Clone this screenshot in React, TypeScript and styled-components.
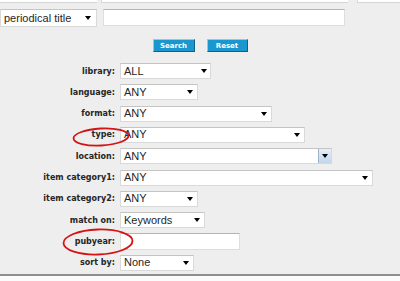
import React from "react";
import styled, { createGlobalStyle } from "styled-components";

const Global = createGlobalStyle`
  html, body { margin: 0; padding: 0; background: #eeeeee; }
  #root { width: 400px; height: 281px; }
`;

const Page = styled.div`
  position: relative;
  width: 400px;
  height: 281px;
  overflow: hidden;
  background: #eeeeee;
  display: flex;
  flex-direction: column;
  font-family: "Liberation Sans", Arial, sans-serif;
`;

const TopStrip = styled.div`
  display: flex;
  height: 3px;
  flex-shrink: 0;
`;

const StripBox = styled.div<{ $w: number; $ml?: number; $edge?: boolean }>`
  width: ${(p) => p.$w}px;
  margin-left: ${(p) => p.$ml ?? 0}px;
  height: 3px;
  box-sizing: border-box;
  background: #ffffff;
  border-left: ${(p) => (p.$edge ? "1px solid #d8d8d8" : "none")};
  border-bottom: 1px solid #d6d6d6;
`;

const SearchRow = styled.div`
  display: flex;
  align-items: flex-start;
  gap: 6px;
  margin-top: 6px;
  flex-shrink: 0;
`;

const SelectBox = styled.div<{ $w: number; $h?: number; $fs?: number }>`
  width: ${(p) => p.$w}px;
  height: ${(p) => p.$h ?? 16}px;
  box-sizing: border-box;
  display: flex;
  align-items: center;
  background: #ffffff;
  border: 1px solid #d9d9d9;
  border-top-color: #c4c4c4;
  padding-left: 3px;
  font-size: ${(p) => p.$fs ?? 11}px;
  color: #262626;
  white-space: nowrap;
  overflow: hidden;
`;

const SelectText = styled.span`
  flex: 1;
  line-height: 1;
`;

const Caret = styled.span<{ $mr?: number }>`
  width: 0;
  height: 0;
  border-left: 3.5px solid transparent;
  border-right: 3.5px solid transparent;
  border-top: 4px solid #000000;
  margin-right: ${(p) => p.$mr ?? 4}px;
  flex-shrink: 0;
`;

const DropButton = styled.span`
  width: 14px;
  align-self: stretch;
  margin: -1px -1px -1px 0;
  box-sizing: border-box;
  border: 1px solid #9db3cc;
  border-radius: 1px;
  background: linear-gradient(#e6eef8, #c3d6ec);
  display: flex;
  align-items: center;
  justify-content: center;
`;

const TextInput = styled.div<{ $w: number; $h?: number }>`
  width: ${(p) => p.$w}px;
  height: ${(p) => p.$h ?? 16}px;
  box-sizing: border-box;
  background: #ffffff;
  border: 1px solid #dedede;
  border-top-color: #b4b4b4;
`;

const ButtonRow = styled.div`
  display: flex;
  justify-content: center;
  gap: 12px;
  margin-top: 12px;
  flex-shrink: 0;
`;

const Button = styled.div<{ $w: number }>`
  width: ${(p) => p.$w}px;
  height: 13px;
  box-sizing: border-box;
  display: flex;
  align-items: center;
  justify-content: center;
  background: #1b97cf;
  border: 1px solid #135f85;
  border-top-color: #8ccbe9;
  border-left-color: #8ccbe9;
  color: #ffffff;
  font-family: "DejaVu Sans", Verdana, sans-serif;
  font-weight: bold;
  font-size: 7px;
`;

const Form = styled.div`
  display: grid;
  grid-template-columns: 115px auto;
  column-gap: 5px;
  row-gap: 5.33px;
  grid-auto-rows: 16px;
  margin-top: 11px;
  flex-shrink: 0;
`;

const Label = styled.div`
  display: flex;
  align-items: center;
  justify-content: flex-end;
  font-family: "DejaVu Sans", Verdana, sans-serif;
  font-weight: bold;
  font-size: 8px;
  color: #262626;
  white-space: nowrap;
`;

const Cell = styled.div`
  display: flex;
  align-items: center;
`;

const Footer = styled.div`
  flex: 1;
  margin-top: 3px;
  border-top: 2px solid #8e8e8e;
  background: #fbfbfb;
`;

const Annotation = styled.svg`
  position: absolute;
  overflow: visible;
  pointer-events: none;
`;

type Field =
  | { label: string; kind: "select"; value: string; w: number; xp?: boolean; mr?: number }
  | { label: string; kind: "input"; w: number };

const fields: Field[] = [
  { label: "library:", kind: "select", value: "ALL", w: 91, mr: 3 },
  { label: "language:", kind: "select", value: "ANY", w: 78 },
  { label: "format:", kind: "select", value: "ANY", w: 152 },
  { label: "type:", kind: "select", value: "ANY", w: 185 },
  { label: "location:", kind: "select", value: "ANY", w: 212, xp: true },
  { label: "item category1:", kind: "select", value: "ANY", w: 253 },
  { label: "item category2:", kind: "select", value: "ANY", w: 78 },
  { label: "match on:", kind: "select", value: "Keywords", w: 85 },
  { label: "pubyear:", kind: "input", w: 120 },
  { label: "sort by:", kind: "select", value: "None", w: 74 },
];

export default function App() {
  return (
    <>
      <Global />
      <Page>
        <TopStrip>
          <StripBox $w={97} />
          <StripBox $w={247} $ml={4} $edge />
          <StripBox $w={43} $ml={9} $edge />
        </TopStrip>

        <SearchRow>
          <SelectBox $w={97} $h={18} $fs={11}>
            <SelectText>periodical title</SelectText>
            <Caret $mr={5} />
          </SelectBox>
          <TextInput $w={242} $h={17} />
        </SearchRow>

        <ButtonRow>
          <Button $w={42}>Search</Button>
          <Button $w={41}>Reset</Button>
        </ButtonRow>

        <Form>
          {fields.map((f) => (
            <React.Fragment key={f.label}>
              <Label>{f.label}</Label>
              <Cell>
                {f.kind === "select" ? (
                  <SelectBox $w={f.w}>
                    <SelectText>{f.value}</SelectText>
                    {f.xp ? (
                      <DropButton>
                        <Caret $mr={0} />
                      </DropButton>
                    ) : (
                      <Caret $mr={f.mr ?? 4} />
                    )}
                  </SelectBox>
                ) : (
                  <TextInput $w={f.w} $h={17} />
                )}
              </Cell>
            </React.Fragment>
          ))}
        </Form>

        <Footer />

        <Annotation
          style={{ left: 72, top: 127 }}
          width="58"
          height="20"
          viewBox="0 0 58 20"
        >
          <ellipse
            cx="29"
            cy="10"
            rx="27.5"
            ry="8.5"
            transform="rotate(-3 29 10)"
            fill="none"
            stroke="#d41414"
            strokeWidth="1.8"
          />
        </Annotation>
        <Annotation
          style={{ left: 62, top: 228 }}
          width="72"
          height="28"
          viewBox="0 0 72 28"
        >
          <ellipse
            cx="36"
            cy="14"
            rx="34.5"
            ry="12.5"
            transform="rotate(-2 36 14)"
            fill="none"
            stroke="#d41414"
            strokeWidth="1.8"
          />
        </Annotation>
      </Page>
    </>
  );
}
